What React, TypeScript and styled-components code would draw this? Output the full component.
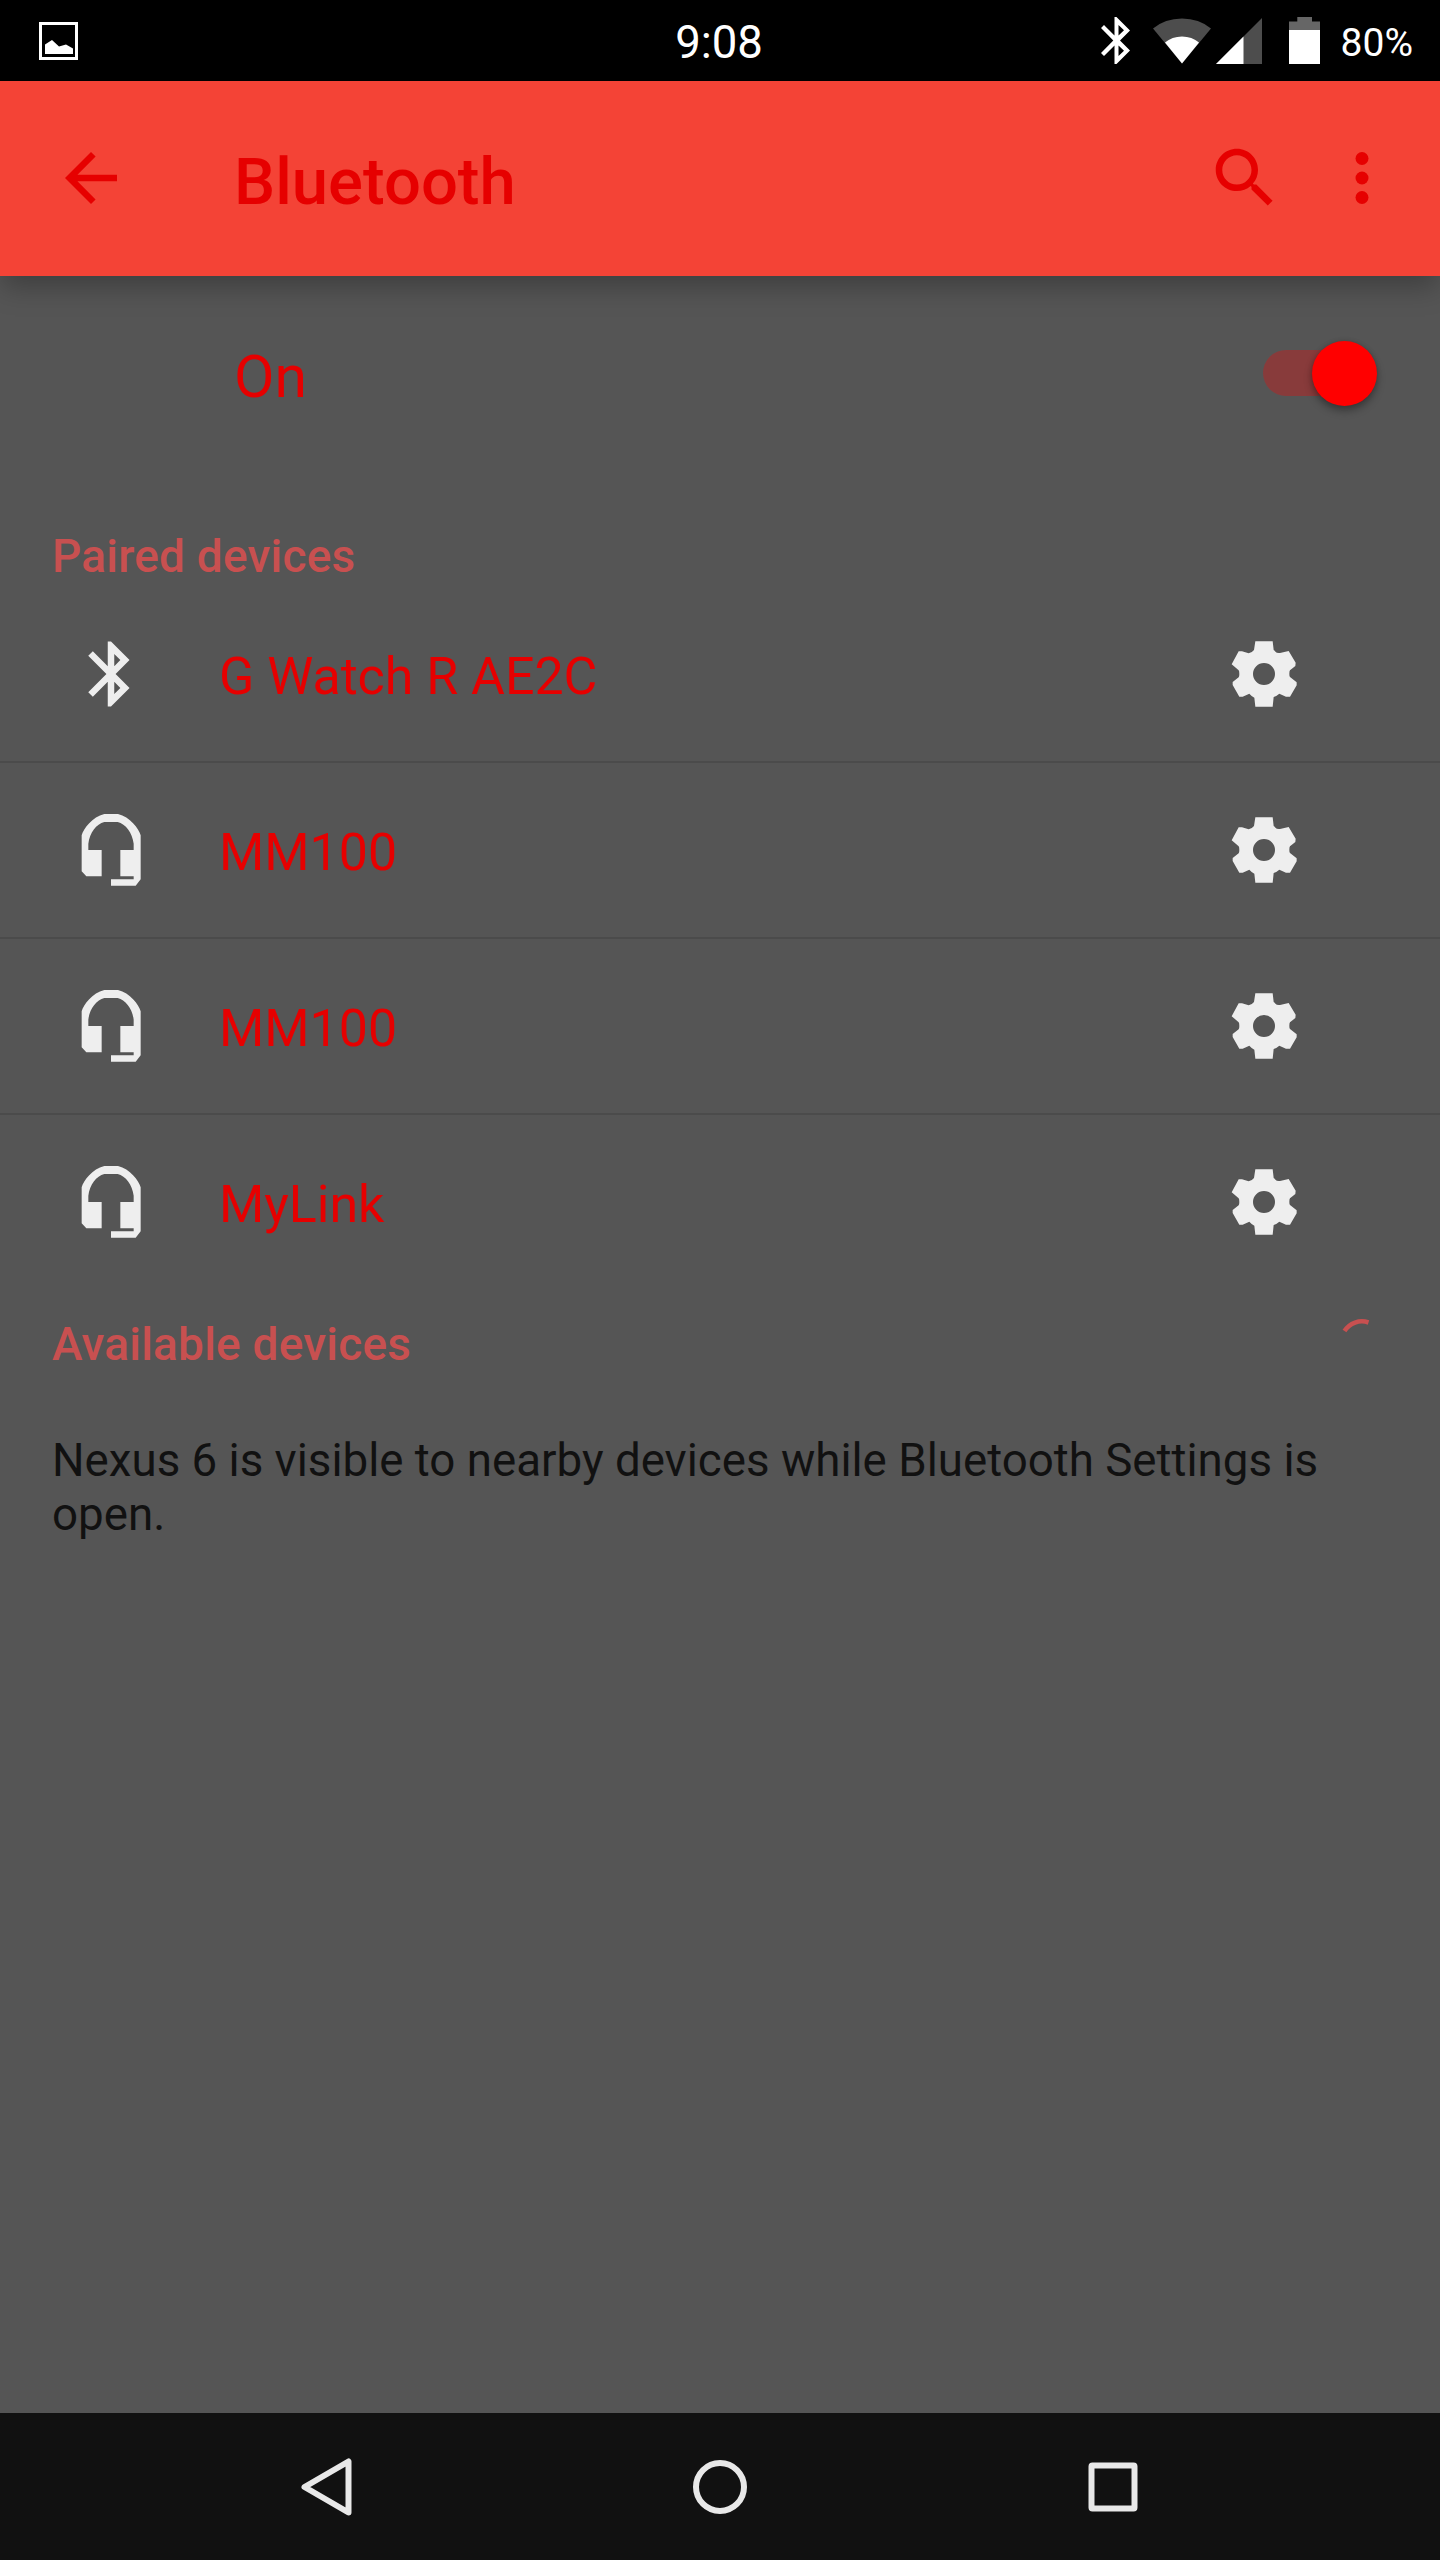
import React from "react";
import styled, { createGlobalStyle } from "styled-components";

const GlobalStyle = createGlobalStyle`
  * { box-sizing: border-box; }
  body { margin: 0; background: #555555; }
`;

const Screen = styled.div`
  display: flex;
  flex-direction: column;
  width: 1440px;
  height: 2560px;
  overflow: hidden;
  background: #555555;
  font-family: Roboto, "Noto Sans", sans-serif;
  font-weight: 400;
  color: #e60000;
`;

const StatusBar = styled.header`
  display: grid;
  grid-template-columns: 1fr auto 1fr;
  align-items: center;
  flex: none;
  height: 81px;
  padding: 0 27px 0 39px;
  background: #000;
  color: #fff;
`;

const StatusLeft = styled.div`
  display: flex;
  align-items: center;
`;

const Clock = styled.div`
  margin-left: -14px;
  padding-top: 4px;
  font-size: 45.5px;
  line-height: 54px;
`;

const StatusRight = styled.div`
  display: flex;
  align-items: center;
  justify-content: flex-end;
`;

const StatusIcon = styled.svg<{ $gap: number }>`
  display: block;
  flex: none;
  margin-right: ${(p) => p.$gap}px;
`;

const BatteryLevel = styled.span`
  padding-top: 5px;
  font-size: 39px;
  line-height: 46px;
`;

const AppBar = styled.div`
  display: flex;
  align-items: center;
  flex: none;
  height: 195px;
  padding: 0 39px 1px 52px;
  background: #f44336;
  box-shadow: 0 13px 26px -2px rgba(0, 0, 0, 0.27);
`;

const ActionIcon = styled.svg`
  display: block;
  flex: none;
  width: 78px;
  height: 78px;
  fill: #e60000;
`;

const Title = styled.h1`
  flex: 1;
  margin: 0;
  padding: 8px 0 0 104px;
  font-size: 65.2px;
  font-weight: 500;
  line-height: 76px;
`;

const Actions = styled.div`
  display: flex;
  gap: 39px;
`;

const SwitchBar = styled.div`
  display: flex;
  align-items: center;
  justify-content: space-between;
  flex: none;
  height: 195px;
  padding: 0 63px 1px 234px;
`;

const SwitchLabel = styled.span`
  padding-top: 7px;
  font-size: 58.8px;
  line-height: 68px;
`;

const SwitchTrack = styled.div`
  display: flex;
  align-items: center;
  justify-content: flex-end;
  width: 114px;
  height: 46px;
  border-radius: 23px;
  background: linear-gradient(90deg, #883b3b 0 82px, transparent 82px);
`;

const SwitchThumb = styled.div`
  flex: none;
  width: 65px;
  height: 65px;
  border-radius: 50%;
  background: #ff0000;
  box-shadow: 0 5px 8px rgba(0, 0, 0, 0.32), 0 0 5px rgba(0, 0, 0, 0.15);
`;

const Content = styled.main`
  display: flex;
  flex-direction: column;
  flex: 1;
`;

const SectionHeader = styled.div<{ $height: number; $top: number }>`
  display: flex;
  justify-content: space-between;
  height: ${(p) => p.$height}px;
  padding: ${(p) => p.$top}px 52px 0;
  color: #c85050;
`;

const SectionTitle = styled.h2`
  margin: 0;
  font-size: 46px;
  font-weight: 500;
  letter-spacing: 0.2px;
  line-height: 54px;
`;

const Spinner = styled.svg`
  display: block;
  flex: none;
  width: 52px;
  height: 52px;
`;

const DeviceList = styled.ul`
  margin: 0;
  padding: 0;
  list-style: none;
`;

const DeviceRow = styled.li`
  display: flex;
  align-items: center;
  height: 176px;
  padding: 0 137px 0 72px;
  border-bottom: 2px solid #4b4b4b;

  &:last-child {
    border-bottom-color: transparent;
  }
`;

const DeviceName = styled.span`
  flex: 1;
  padding: 6px 0 0 69px;
  font-size: 51.9px;
  line-height: 62px;
`;

const RowIcon = styled.svg`
  display: block;
  flex: none;
  width: 78px;
  height: 78px;
  fill: #eeeeee;
`;

const Notice = styled.p`
  margin: 0;
  padding: 2px 100px 0 52px;
  color: #111111;
  font-size: 45.7px;
  line-height: 54px;
`;

const NavBar = styled.nav`
  display: flex;
  align-items: center;
  justify-content: center;
  gap: 315px;
  flex: none;
  height: 147px;
  padding-right: 1px;
  background: #111111;
`;

const NavIcon = styled.svg`
  display: block;
  flex: none;
  width: 78px;
  height: 78px;
  fill: none;
  stroke: #e8e8e8;
  stroke-width: 6;
  stroke-linejoin: round;
`;

const BluetoothIcon = () => (
  <RowIcon viewBox="0 0 24 24">
    <path d="M17.71 7.71L12 2h-1v7.59L6.41 5 5 6.41 10.59 12 5 17.59 6.41 19 11 14.41V22h1l5.71-5.71-4.3-4.29 4.3-4.29zM13 5.83l1.88 1.88L13 9.59V5.83zm1.88 10.46L13 18.17v-3.76l1.88 1.88z" />
  </RowIcon>
);

const HeadsetIcon = () => (
  <RowIcon viewBox="6 33 234 234">
    <path d="M103 42H144C180 50 206 86 212 106V238L197 257H123V238H191V229H151V150H191V131C187 98 167 72 143 66H103C79 72 59 98 55 131V150H95V229H49L35 214V106C41 86 67 50 103 42Z" />
  </RowIcon>
);

const GearIcon = () => (
  <RowIcon viewBox="135 105 234 234">
    <path
      fillRule="evenodd"
      d="M226 124H278L281 150Q284 152 287 156Q290 160 300 159L326 153L347 188L346 198L330 211Q328 213 328 222Q328 229 330 231L350 247V256L330 290H318L298 281Q290 288 281 291L278 320H226L223 293Q216 290 208 281L188 290H178L158 255V246L176 232Q178 230 178 222Q178 213 176 211L155 193L176 154H186L206 160Q216 158 222 150ZM252 189A33 33 0 1 0 252 255A33 33 0 1 0 252 189Z"
    />
  </RowIcon>
);

const devices = [
  { id: 1, name: "G Watch R AE2C", Icon: BluetoothIcon },
  { id: 2, name: "MM100", Icon: HeadsetIcon },
  { id: 3, name: "MM100", Icon: HeadsetIcon },
  { id: 4, name: "MyLink", Icon: HeadsetIcon },
];

export default function App() {
  return (
    <Screen>
      <GlobalStyle />
      <StatusBar>
        <StatusLeft>
          <StatusIcon $gap={0} width="39" height="38" viewBox="0 0 39 38">
            <rect x="1.5" y="1.5" width="36" height="35" fill="none" stroke="#fff" strokeWidth="3" />
            <path d="M6 32V22.5L13 18L20 24.5L27 22.5L34 26.5V32Z" fill="#fff" />
          </StatusIcon>
        </StatusLeft>
        <Clock>9:08</Clock>
        <StatusRight>
          <StatusIcon $gap={23} width="29" height="47" viewBox="0 0 29 47">
            <path
              fillRule="evenodd"
              fill="#fff"
              d="M13.5 0H15.5L29 13.5L19 23.5L29 33.5L15.5 47H13.5V28.5L3 39L0 36L12.3 23.5L0 11L3 8L13.5 18.5ZM17.5 8V18.5L23 13.3ZM17.5 28.5V39L23 33.7Z"
            />
          </StatusIcon>
          <StatusIcon $gap={5} width="58" height="46" viewBox="0 0 58 46">
            <path d="M0 10.5Q12 0.5 29 0.5T58 10.5L29 45.5Z" fill="#4d4d4d" />
            <path d="M12 24.5Q19 18.5 29 18.5T46 24.5L29 45.5Z" fill="#fff" />
          </StatusIcon>
          <StatusIcon $gap={27} width="46" height="46" viewBox="0 0 46 46">
            <path d="M0 46L46 0V46Z" fill="#4d4d4d" />
            <path d="M0 46L27.5 18.5V46Z" fill="#fff" />
          </StatusIcon>
          <StatusIcon $gap={21} width="31" height="47" viewBox="0 0 31 47">
            <path d="M8.3 0H23V4.5H31V13H0V4.5H8.3Z" fill="#666" />
            <path d="M0 13H31V47H0Z" fill="#fff" />
          </StatusIcon>
          <BatteryLevel>80%</BatteryLevel>
        </StatusRight>
      </StatusBar>

      <AppBar>
        <ActionIcon viewBox="0 0 24 24">
          <path d="M20 11H7.83l5.59-5.59L12 4l-8 8 8 8 1.41-1.41L7.83 13H20v-2z" />
        </ActionIcon>
        <Title>Bluetooth</Title>
        <Actions>
          <ActionIcon viewBox="0 0 24 24">
            <path d="M15.5 14h-.79l-.28-.27C15.41 12.59 16 11.11 16 9.5 16 5.91 13.09 3 9.5 3S3 5.91 3 9.5 5.91 16 9.5 16c1.61 0 3.09-.59 4.23-1.57l.27.28v.79l5 4.99L20.49 19l-4.99-5zm-6 0C7.01 14 5 11.99 5 9.5S7.01 5 9.5 5 14 7.01 14 9.5 11.99 14 9.5 14z" />
          </ActionIcon>
          <ActionIcon viewBox="0 0 24 24">
            <circle cx="12" cy="6" r="2" />
            <circle cx="12" cy="12" r="2" />
            <circle cx="12" cy="18" r="2" />
          </ActionIcon>
        </Actions>
      </AppBar>

      <SwitchBar>
        <SwitchLabel>On</SwitchLabel>
        <SwitchTrack>
          <SwitchThumb />
        </SwitchTrack>
      </SwitchBar>

      <Content>
        <SectionHeader $height={116} $top={58}>
          <SectionTitle>Paired devices</SectionTitle>
        </SectionHeader>
        <DeviceList>
          {devices.map(({ id, name, Icon }) => (
            <DeviceRow key={id}>
              <Icon />
              <DeviceName>{name}</DeviceName>
              <GearIcon />
            </DeviceRow>
          ))}
        </DeviceList>
        <SectionHeader $height={141} $top={26}>
          <SectionTitle>Available devices</SectionTitle>
          <Spinner viewBox="0 0 52 52">
            <path d="M8.5 14A20.5 20.5 0 0 1 32.5 5.5" fill="none" stroke="#c85050" strokeWidth="4.5" />
          </Spinner>
        </SectionHeader>
        <Notice>Nexus 6 is visible to nearby devices while Bluetooth Settings is open.</Notice>
      </Content>

      <NavBar>
        <NavIcon viewBox="0 0 78 78">
          <path d="M60.5 13.5V64.5L16.5 39Z" />
        </NavIcon>
        <NavIcon viewBox="0 0 78 78">
          <circle cx="39" cy="39" r="24" />
        </NavIcon>
        <NavIcon viewBox="0 0 78 78">
          <rect x="17.5" y="17.5" width="43" height="43" rx="1" />
        </NavIcon>
      </NavBar>
    </Screen>
  );
}
